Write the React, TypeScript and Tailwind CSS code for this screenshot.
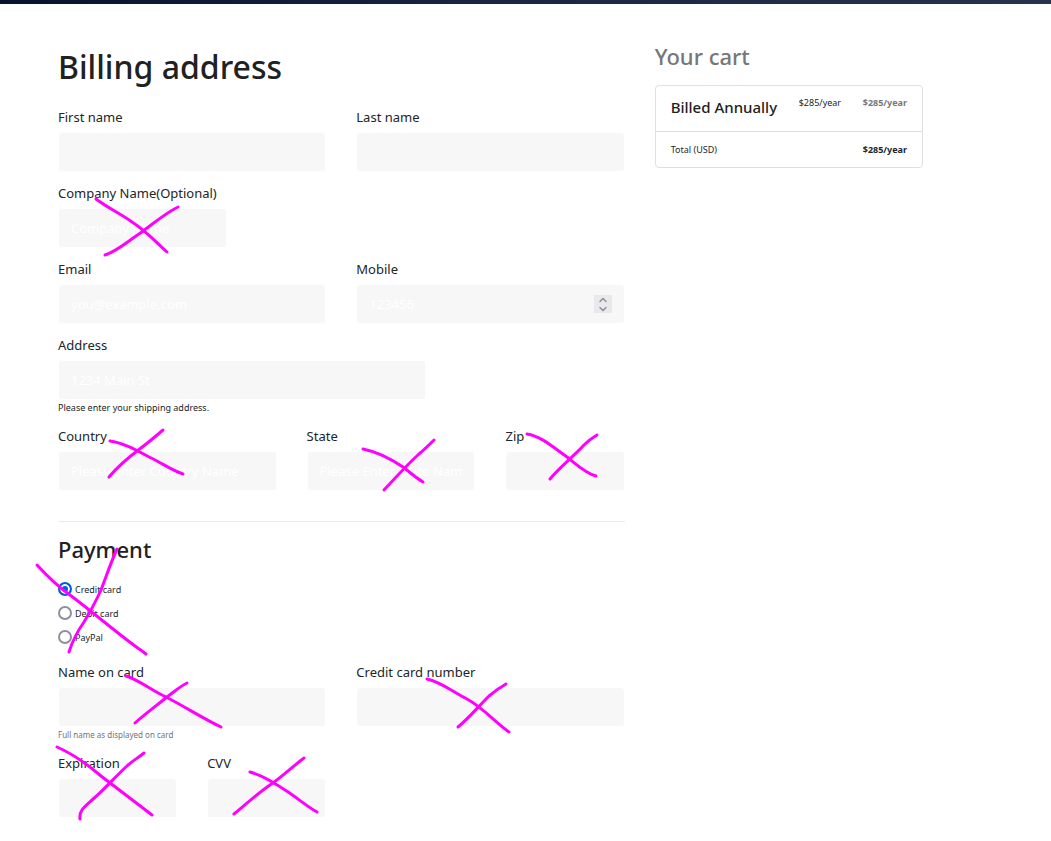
import { ReactNode, useState } from 'react';
import { ChevronDown, ChevronUp } from 'lucide-react';
import clsx from 'clsx';

type FieldProps = {
  id: string;
  label: string;
  className: string;
  placeholder?: string;
  type?: string;
  help?: ReactNode;
};

const inputClass =
  'block h-10 w-full rounded border border-white bg-[#f7f7f7] px-3 text-[13px] text-gray-700 placeholder:text-white placeholder:opacity-100';
const labelClass = 'mb-0.5 block text-[13px] leading-[26px] text-[#212529]';

function Field({ id, label, className, placeholder, type = 'text', help }: FieldProps) {
  return (
    <div className={className}>
      <label htmlFor={id} className={labelClass}>{label}</label>
      <input id={id} type={type} placeholder={placeholder} className={inputClass} />
      {help}
    </div>
  );
}

function MobileField() {
  const [mobile, setMobile] = useState('');
  const step = (by: number) => setMobile(String(Number(mobile) + by));

  return (
    <div className="col-span-6">
      <label htmlFor="mobile" className={labelClass}>Mobile</label>
      <div className="relative">
        <input
          id="mobile"
          type="number"
          placeholder="123456"
          value={mobile}
          onChange={(e) => setMobile(e.target.value)}
          className={clsx(
            inputClass,
            '[appearance:textfield] [&::-webkit-inner-spin-button]:appearance-none [&::-webkit-outer-spin-button]:appearance-none'
          )}
        />
        <div className="absolute inset-y-0 right-[13px] flex flex-col justify-center text-[#8f8f9d]">
          <button type="button" aria-label="Increase" onClick={() => step(1)} className="flex h-[9px] w-[18px] items-center justify-center bg-[#e9e9ed]">
            <ChevronUp className="size-3" strokeWidth={3} />
          </button>
          <button type="button" aria-label="Decrease" onClick={() => step(-1)} className="flex h-[9px] w-[18px] items-center justify-center bg-[#e9e9ed]">
            <ChevronDown className="size-3" strokeWidth={3} />
          </button>
        </div>
      </div>
    </div>
  );
}

const paymentMethods = [
  { id: 'credit', label: 'Credit card' },
  { id: 'debit', label: 'Debit card' },
  { id: 'paypal', label: 'PayPal' },
];

// Pen marks over the fields that should go
const marks = [
  'M96 199 C108 208 121 214 132 222 C146 231 156 242 167 252',
  'M105 255 C117 251 127 242 139 234 C153 224 164 214 178 207',
  'M110 441 C125 443 141 453 157 461 C168 467 174 471 183 474',
  'M109 477 C118 466 129 457 141 448 C149 442 156 436 163 430',
  'M363 449 C378 452 391 459 403 467 C411 473 416 478 423 482',
  'M384 490 C396 477 407 465 419 454 C425 449 429 445 434 440',
  'M527 434 C541 436 554 448 567 457 C576 464 585 473 596 476',
  'M550 479 C560 467 574 456 584 445 C588 441 592 438 597 435',
  'M37 565 C49 578 57 586 70 595 C90 610 111 628 131 643 C136 647 141 650 146 654',
  'M117 549 C111 562 106 577 101 590 C96 601 90 612 84 622 C77 632 73 639 69 652',
  'M126 676 C139 680 151 690 164 696 C184 706 202 718 221 727',
  'M135 723 C145 714 156 706 167 697 C174 692 179 687 187 683',
  'M427 679 C441 682 453 692 467 699 C482 707 495 722 509 732',
  'M458 727 C468 719 478 707 489 696 C495 691 499 688 506 684',
  'M57 747 C73 754 87 764 101 776 C118 789 135 802 152 815',
  'M80 819 C79 811 84 807 92 800 C104 790 115 777 127 766 C132 761 138 758 144 753',
  'M250 772 C265 776 279 786 291 794 C301 801 308 807 317 812',
  'M234 814 C246 804 257 794 270 785 C282 777 292 767 304 758',
];

export default function App() {
  return (
    <div className="relative min-h-screen bg-white pb-5 font-['Noto_Sans',sans-serif] text-[#212529]">
      <div className="h-1 bg-linear-to-r from-[#06132b] via-[#1b2742] to-[#263349]" />

      <main className="grid grid-cols-3 gap-x-[30px] pt-10 pr-32 pl-[58px]">
        <form className="col-span-2">
          <h1 className="mb-3.5 text-[32px] leading-[46px] font-medium text-[#212121]">Billing address</h1>

          <div className="grid grid-cols-12 gap-x-[30px] gap-y-2">
            <Field id="firstName" label="First name" className="col-span-6" />
            <Field id="lastName" label="Last name" className="col-span-6" />
            <Field id="company" label="Company Name(Optional)" placeholder="Company Name" className="col-span-4 whitespace-nowrap" />
            <Field id="email" label="Email" type="email" placeholder="you@example.com" className="col-span-6 col-start-1" />
            <MobileField />
            <Field
              id="address"
              label="Address"
              placeholder="1234 Main St"
              className="col-span-8"
              help={<p className="text-[9px] leading-[15px]">Please enter your shipping address.</p>}
            />
            <Field id="country" label="Country" placeholder="Please Enter Country Name" className="col-span-5 col-start-1" />
            <Field id="state" label="State" placeholder="Please Enter State Name" className="col-span-4" />
            <Field id="zip" label="Zip" className="col-span-3" />
          </div>

          <hr className="mt-[30px] mb-3 border-[#ebebeb]" />

          <h2 className="mb-3 text-[22px] leading-[31px] font-medium text-[#212121]">Payment</h2>
          <div className="mb-2.5">
            {paymentMethods.map((method, i) => (
              <div key={method.id} className="flex h-6 items-center gap-[3px]">
                <input
                  id={method.id}
                  type="radio"
                  name="paymentMethod"
                  defaultChecked={i === 0}
                  className="size-3.5 appearance-none rounded-full border-2 border-[#8f8f9d] checked:border-[#0060df] checked:bg-[#0060df] checked:shadow-[inset_0_0_0_2px_white]"
                />
                <label htmlFor={method.id} className="pt-0.5 text-[9px] leading-4">{method.label}</label>
              </div>
            ))}
          </div>

          <div className="grid grid-cols-12 gap-x-[30px] gap-y-2">
            <Field
              id="cardName"
              label="Name on card"
              className="col-span-6"
              help={<small className="block text-[8px] leading-[15px] text-[#6c757d]">Full name as displayed on card</small>}
            />
            <Field id="cardNumber" label="Credit card number" className="col-span-6" />
            <Field id="expiration" label="Expiration" className="col-span-3" />
            <Field id="cvv" label="CVV" className="col-span-3" />
          </div>
        </form>

        {/* Cart */}
        <aside>
          <h2 className="mb-4 text-[22px] leading-[25px] font-medium text-[#777777]">Your cart</h2>
          <ul className="rounded border border-[#dfdfdf] text-[9px] leading-[15px]">
            <li className="flex justify-between border-b border-[#dfdfdf] px-[15px] pt-[9px] pb-3">
              <h3 className="text-[15px] leading-6 font-medium text-[#212121]">Billed Annually</h3>
              <span>$285/year</span>
              <span className="font-bold text-[#777777]">$285/year</span>
            </li>
            <li className="flex justify-between px-[15px] py-2.5">
              <span>Total (USD)</span>
              <strong>$285/year</strong>
            </li>
          </ul>
        </aside>
      </main>

      <svg className="pointer-events-none absolute top-0 left-0" width="1051" height="841" fill="none" stroke="#ff00ff" strokeWidth="3" strokeLinecap="round" aria-hidden="true">
        {marks.map((d) => (
          <path key={d} d={d} />
        ))}
      </svg>
    </div>
  );
}
